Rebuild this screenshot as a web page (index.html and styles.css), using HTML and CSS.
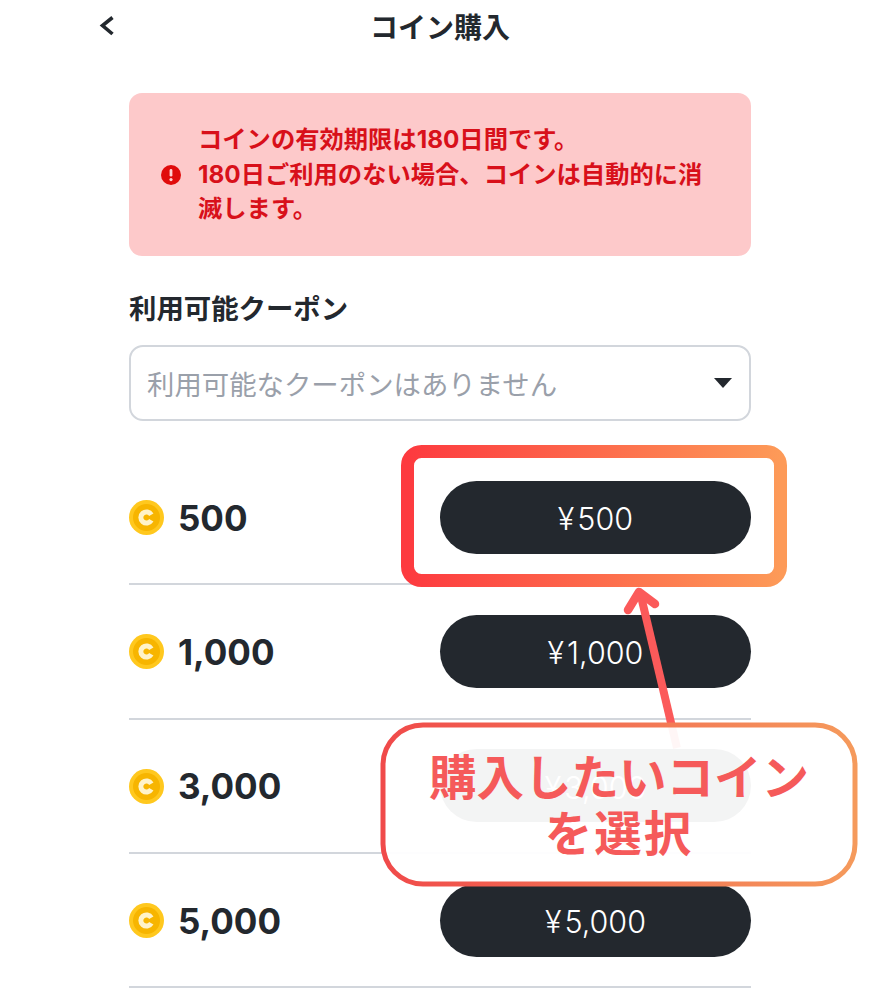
FILE: index.html
```html
<!DOCTYPE html>
<html lang="ja">
<head>
<meta charset="utf-8">
<title>コイン購入</title>
<link rel="stylesheet" href="styles.css">
</head>
<body>
<div class="page">
  <header class="topbar">
    <svg class="back" width="18" height="26" viewBox="0 0 18 26"><path d="M14.500 4.500 L4.500 12.500 L14.500 21" fill="none" stroke="#23282e" stroke-width="3.600"/></svg>
    <h1 class="title">コイン購入</h1>
  </header>
  <main class="content">
    <section class="alert">
      <svg class="alert-icon" width="22" height="22" viewBox="0 0 22 22"><circle cx="11" cy="11" r="10" fill="#e00b0b"/><rect x="9.600" y="5" width="2.800" height="7.600" rx="1.400" fill="#ffd0d0"/><circle cx="11" cy="15.600" r="1.600" fill="#ffd0d0"/></svg>
      <p class="alert-text">コインの有効期限は180日間です。<br>180日ご利用のない場合、コインは自動的に消滅します。</p>
    </section>
    <h2 class="label">利用可能クーポン</h2>
    <div class="select">
      <span class="placeholder">利用可能なクーポンはありません</span>
      <span class="caret"></span>
    </div>
    <ul class="coins">
      <li class="row">
        <span class="coin"><svg width="35" height="35" viewBox="0 0 35 35"><circle cx="17.500" cy="17.500" r="17.500" fill="#ffc81e"/><circle cx="17.500" cy="17.500" r="13.500" fill="#f7b500"/><path d="M22.300 14.700 A5.600 5.600 0 1 0 22.300 20.300" fill="none" stroke="#fff3c9" stroke-width="5"/></svg></span>
        <span class="amount">500</span>
        <button class="buy"><span class="yen">¥</span>500</button>
      </li>
      <li class="row">
        <span class="coin"><svg width="35" height="35" viewBox="0 0 35 35"><circle cx="17.500" cy="17.500" r="17.500" fill="#ffc81e"/><circle cx="17.500" cy="17.500" r="13.500" fill="#f7b500"/><path d="M22.300 14.700 A5.600 5.600 0 1 0 22.300 20.300" fill="none" stroke="#fff3c9" stroke-width="5"/></svg></span>
        <span class="amount">1,000</span>
        <button class="buy"><span class="yen">¥</span>1,000</button>
      </li>
      <li class="row">
        <span class="coin"><svg width="35" height="35" viewBox="0 0 35 35"><circle cx="17.500" cy="17.500" r="17.500" fill="#ffc81e"/><circle cx="17.500" cy="17.500" r="13.500" fill="#f7b500"/><path d="M22.300 14.700 A5.600 5.600 0 1 0 22.300 20.300" fill="none" stroke="#fff3c9" stroke-width="5"/></svg></span>
        <span class="amount">3,000</span>
        <button class="buy"><span class="yen">¥</span>3,000</button>
      </li>
      <li class="row">
        <span class="coin"><svg width="35" height="35" viewBox="0 0 35 35"><circle cx="17.500" cy="17.500" r="17.500" fill="#ffc81e"/><circle cx="17.500" cy="17.500" r="13.500" fill="#f7b500"/><path d="M22.300 14.700 A5.600 5.600 0 1 0 22.300 20.300" fill="none" stroke="#fff3c9" stroke-width="5"/></svg></span>
        <span class="amount">5,000</span>
        <button class="buy"><span class="yen">¥</span>5,000</button>
      </li>
    </ul>
  </main>

  <svg class="annotations" width="880" height="1000" viewBox="0 0 880 1000">
    <defs>
      <linearGradient id="grad" x1="0" y1="0" x2="1" y2="0">
        <stop offset="0" stop-color="#fd3a3f"/>
        <stop offset="1" stop-color="#fd9a58"/>
      </linearGradient>
      <linearGradient id="grad2" x1="0" y1="0" x2="1" y2="0">
        <stop offset="0" stop-color="#f04a4a"/>
        <stop offset="1" stop-color="#f59a5c"/>
      </linearGradient>
    </defs>
    <rect x="407.500" y="451.500" width="373" height="129" rx="14" fill="none" stroke="url(#grad)" stroke-width="13"/>
    <path d="M677 748 L640 592" fill="none" stroke="#fb5a5a" stroke-width="8"/>
    <path d="M628 610 L639 592 L655 604" fill="none" stroke="#fb5a5a" stroke-width="8.500" stroke-linecap="round" stroke-linejoin="round"/>
    <rect x="383" y="725" width="472" height="159" rx="40" fill="#fff" fill-opacity="0.950" stroke="url(#grad2)" stroke-width="5"/>
  </svg>
  <p class="callout">購入したいコイン<br><span class="callout-second">を選択</span></p>
</div>
</body>
</html>
```

FILE: styles.css
```css
* { box-sizing: border-box; }
html, body { margin: 0; padding: 0; background: #fff; }
body { font-family: Inter, "Noto Sans CJK JP", sans-serif; color: #23282e; }
.page { position: relative; width: 880px; height: 1000px; overflow: hidden; }
.topbar { position: relative; height: 54px; display: flex; align-items: center; justify-content: center; }
.back { position: absolute; left: 98px; top: 13px; }
.title { margin: 2px 0 0; font-size: 28px; font-weight: 700; line-height: 54px; }
.content { padding: 38px 129px 0; }
.alert { margin-top: 1px; height: 163px; background: #fdc9ca; border-radius: 13px; display: flex; align-items: center; padding: 0 40px 0 31px; gap: 16px; }
.alert-icon { flex: none; }
.alert-text { margin: -1px 0 0; font-size: 24.300px; line-height: 34.500px; font-weight: 700; color: #d8101a; }
.label { margin: 35px 0 0; font-size: 27.400px; line-height: 36px; font-weight: 700; }
.select { margin-top: 18px; height: 76px; border: 2px solid #d2d6dc; border-radius: 14px; display: flex; align-items: center; justify-content: space-between; padding: 0 16px; }
.placeholder { font-size: 27.400px; line-height: 36px; margin-top: 3px; color: #9aa0aa; }
.caret { width: 0; height: 0; border-left: 9px solid transparent; border-right: 9px solid transparent; border-top: 10px solid #23282e; margin-right: 1px; }
.coins { list-style: none; margin: 30px 0 0; padding: 0; }
.row { height: 134.300px; border-bottom: 2px solid #d2d6dc; display: flex; align-items: center; }
.coin { width: 35px; height: 35px; flex: none; display: flex; margin: 1px 14px 0 0; }
.amount { flex: 1; font-size: 35px; font-weight: 700; margin-top: 1px; }
.buy { width: 311px; height: 73px; padding: 3px 0 0; border: 0; border-radius: 37px; background: #23282e; color: #fff; font-family: Inter, "Noto Sans CJK JP", sans-serif; font-size: 30.500px; font-weight: 300; }
.yen { margin-right: 3px; }
.annotations { position: absolute; left: 0; top: 0; pointer-events: none; }
.callout { position: absolute; left: 383px; top: 750px; width: 472px; margin: 0; text-align: center; font-size: 47.500px; line-height: 56px; font-weight: 700; color: #f55a5a; }
.callout-second { letter-spacing: 2px; }
```
